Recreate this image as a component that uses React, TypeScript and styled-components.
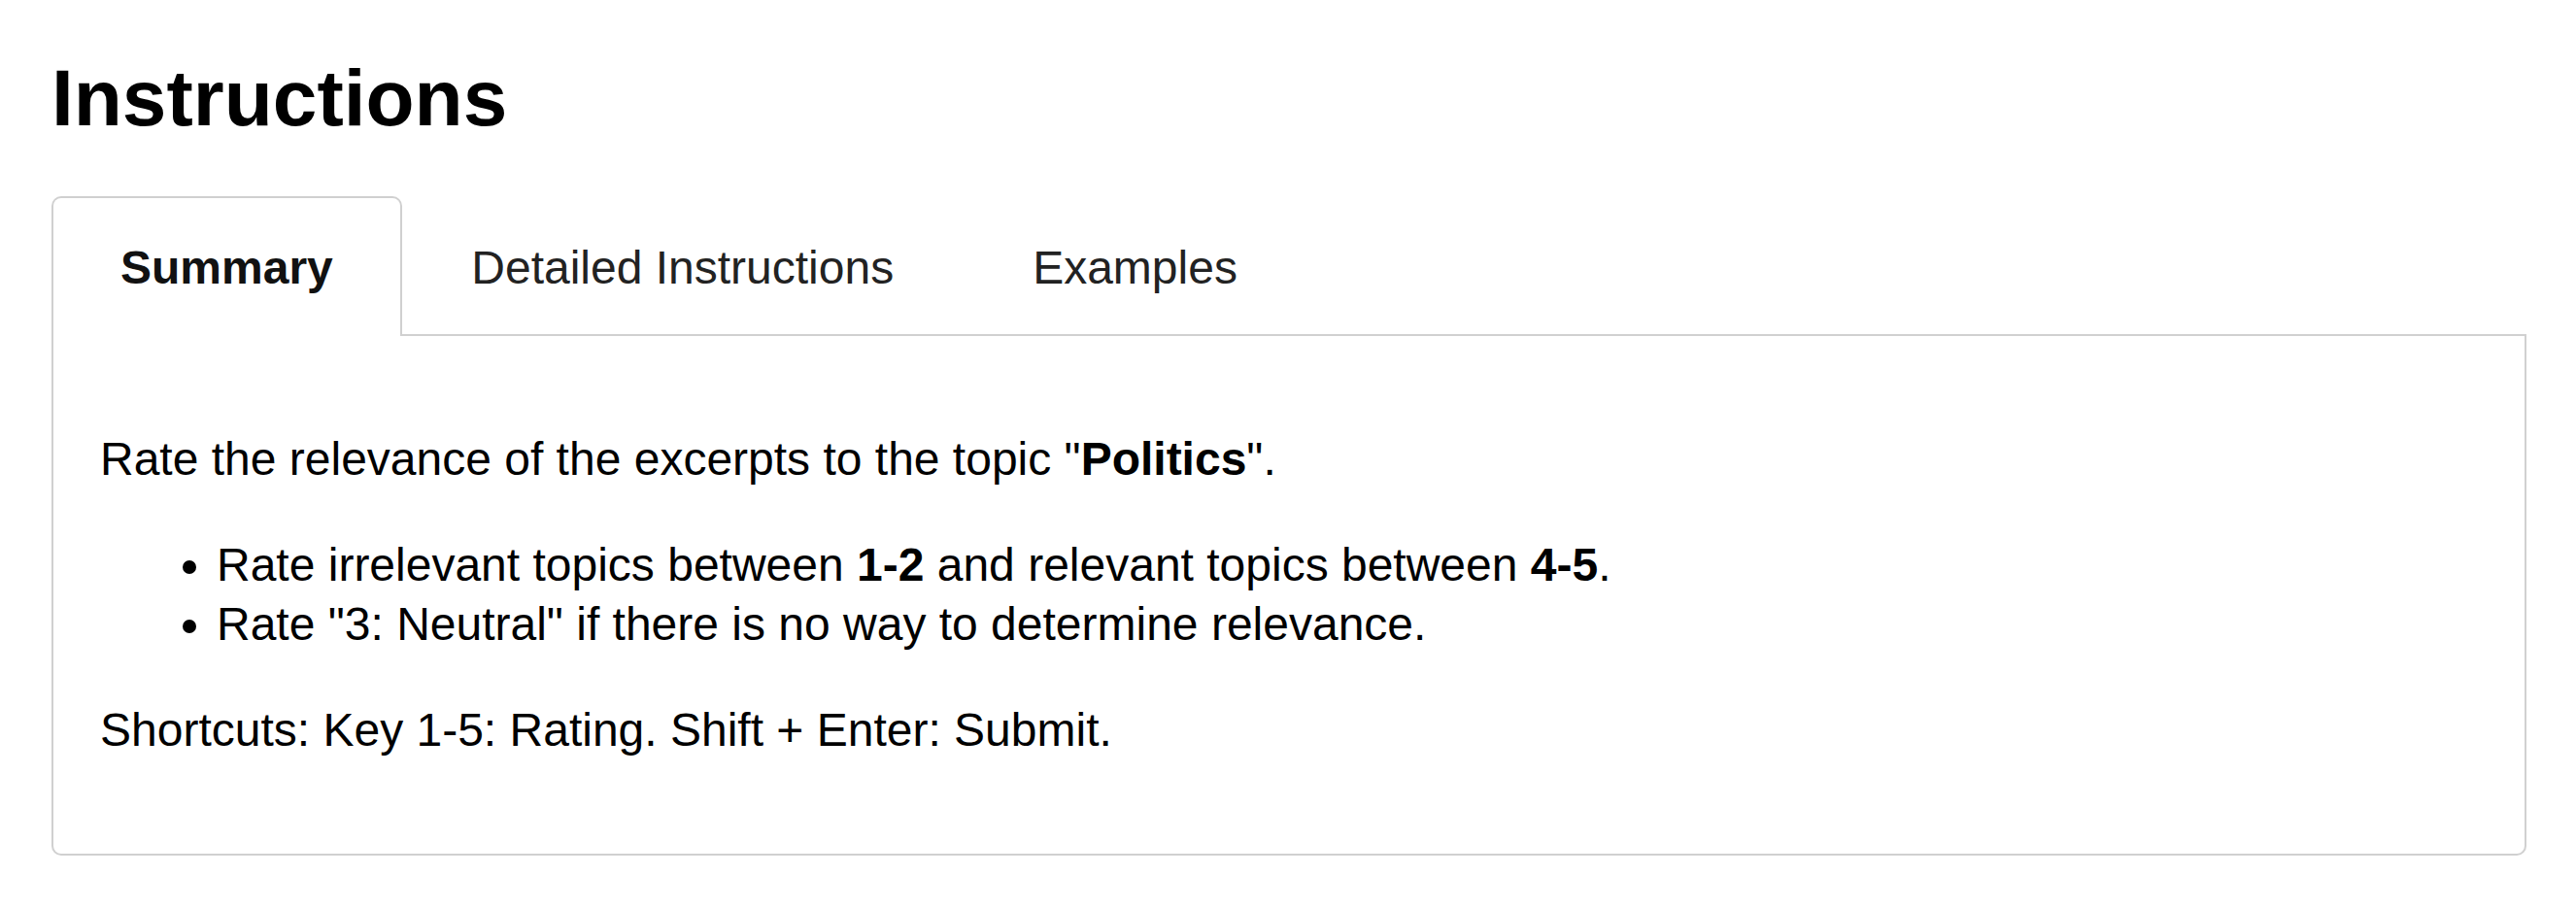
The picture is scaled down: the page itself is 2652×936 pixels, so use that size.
import React from "react";
import styled, { createGlobalStyle } from "styled-components";

const GlobalStyle = createGlobalStyle`
  html, body {
    margin: 0;
    padding: 0;
    background: #ffffff;
  }
  body {
    font-family: "Liberation Sans", Arial, Helvetica, sans-serif;
    color: #000000;
  }
  * { box-sizing: border-box; }
`;

const Page = styled.div`
  padding: 53px 51px 40px 53px;
`;

const Title = styled.h1`
  margin: 0 0 53px;
  font-size: 82px;
  line-height: 96px;
  font-weight: 700;
  color: #000;
`;

const TabList = styled.div`
  display: flex;
  align-items: stretch;
  height: 144px;
`;

const Tab = styled.div<{ $active?: boolean }>`
  height: 144px;
  font-size: 48px;
  line-height: 57.6px;
  white-space: nowrap;
  background: #fff;
  cursor: pointer;
  font-weight: ${(p) => (p.$active ? 700 : 400)};
  color: ${(p) => (p.$active ? "#111" : "#222")};
  ${(p) =>
    p.$active
      ? `
    padding: 43px 69px 0;
    border: 2px solid #d0d0d0;
    border-bottom: none;
    border-radius: 10px 10px 0 0;
  `
      : `
    padding: 45px 71.5px 0;
    border-bottom: 2px solid #d0d0d0;
  `}
`;

const TabFiller = styled.div`
  flex: 1;
  border-bottom: 2px solid #d0d0d0;
`;

const Panel = styled.div`
  border: 2px solid #d0d0d0;
  border-top: none;
  border-radius: 0 0 10px 10px;
  padding: 48px 48px 49px;
  font-size: 48px;
  line-height: 61px;
  color: #000;
`;

const Para = styled.p`
  margin: 48px 0;
`;

const List = styled.ul`
  margin: 48px 0;
  padding-left: 120px;
  list-style: disc;
`;

const Item = styled.li``;

export default function App() {
  return (
    <>
      <GlobalStyle />
      <Page>
        <Title>Instructions</Title>
        <TabList>
          <Tab $active>Summary</Tab>
          <Tab>Detailed Instructions</Tab>
          <Tab>Examples</Tab>
          <TabFiller />
        </TabList>
        <Panel>
          <Para>
            Rate the relevance of the excerpts to the topic "<b>Politics</b>".
          </Para>
          <List>
            <Item>
              Rate irrelevant topics between <b>1-2</b> and relevant topics between <b>4-5</b>.
            </Item>
            <Item>Rate "3: Neutral" if there is no way to determine relevance.</Item>
          </List>
          <Para>Shortcuts: Key 1-5: Rating. Shift + Enter: Submit.</Para>
        </Panel>
      </Page>
    </>
  );
}
